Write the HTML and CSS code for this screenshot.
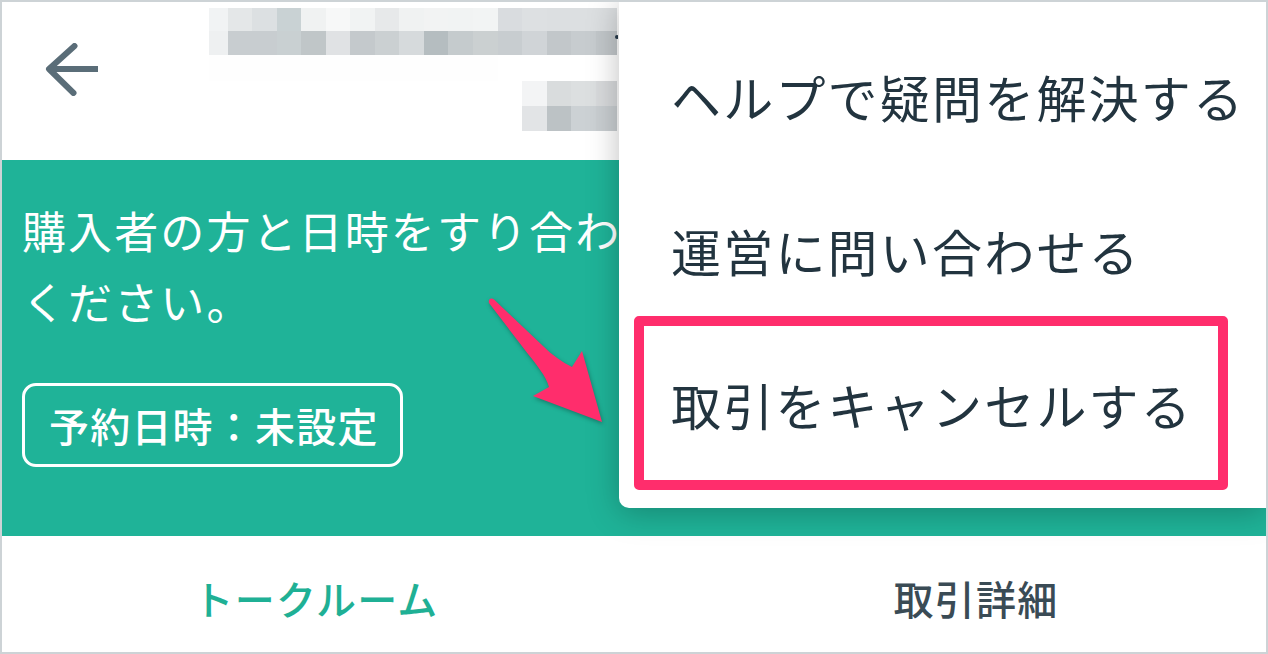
FILE: index.html
```html
<!DOCTYPE html>
<html lang="ja">
<head>
<meta charset="utf-8">
<title>取引メニュー</title>
<link rel="stylesheet" href="styles.css">
</head>
<body>
<div class="frame">
  <header class="header">
    <svg class="back" width="53" height="53" viewBox="45 43 53 53" aria-label="戻る">
      <path d="M97 69H50M74.500 46 49 69 73.500 93" fill="none" stroke="#5a6d78" stroke-width="6" stroke-linecap="round" stroke-linejoin="round"/>
    </svg>
    <svg class="mosaic" width="409" height="123" viewBox="209 8 409 123" aria-hidden="true">
      <g>
        <rect x="209" y="8" width="19" height="23" fill="#f1f3f4"/><rect x="228" y="8" width="24" height="23" fill="#e4e7e8"/><rect x="252" y="8" width="25" height="23" fill="#dce0e2"/><rect x="277" y="8" width="24" height="23" fill="#c9d2d4"/><rect x="301" y="8" width="25" height="23" fill="#f0f2f2"/><rect x="326" y="8" width="24" height="23" fill="#f7f8f8"/><rect x="350" y="8" width="25" height="23" fill="#f1f3f3"/><rect x="375" y="8" width="24" height="23" fill="#e7e9ea"/><rect x="399" y="8" width="25" height="23" fill="#f0f2f2"/><rect x="424" y="8" width="24" height="23" fill="#f2f3f3"/><rect x="448" y="8" width="25" height="23" fill="#f1f3f3"/><rect x="473" y="8" width="25" height="23" fill="#f2f4f4"/><rect x="498" y="8" width="24" height="23" fill="#d9dcdf"/><rect x="522" y="8" width="25" height="23" fill="#dde0e2"/><rect x="547" y="8" width="70" height="23" fill="#dcdfe1"/>
        <rect x="209" y="31" width="19" height="24" fill="#eef0f1"/><rect x="228" y="31" width="49" height="24" fill="#c8cdd0"/><rect x="277" y="31" width="24" height="24" fill="#c9d0d2"/><rect x="301" y="31" width="25" height="24" fill="#c0c6c8"/><rect x="326" y="31" width="24" height="24" fill="#e0e2e4"/><rect x="350" y="31" width="25" height="24" fill="#c4c9cc"/><rect x="375" y="31" width="24" height="24" fill="#cbd0d2"/><rect x="399" y="31" width="25" height="24" fill="#d6dadc"/><rect x="424" y="31" width="24" height="24" fill="#b5bdc0"/><rect x="448" y="31" width="25" height="24" fill="#c5cbcd"/><rect x="473" y="31" width="25" height="24" fill="#cbd0d1"/><rect x="498" y="31" width="24" height="24" fill="#c8cdd0"/><rect x="522" y="31" width="25" height="24" fill="#d0d4d7"/><rect x="547" y="31" width="24" height="24" fill="#c2c7ca"/><rect x="571" y="31" width="25" height="24" fill="#c7cccf"/><rect x="596" y="31" width="21" height="24" fill="#c2c7ca"/>
        <rect x="209" y="55" width="289" height="26" fill="#fefefe"/>
        <rect x="522" y="81" width="25" height="25" fill="#f3f4f5"/><rect x="547" y="81" width="24" height="25" fill="#d9dcdd"/><rect x="571" y="81" width="25" height="25" fill="#dcdfe0"/><rect x="596" y="81" width="21" height="25" fill="#d8dadc"/>
        <rect x="522" y="106" width="25" height="25" fill="#e2e4e6"/><rect x="547" y="106" width="24" height="25" fill="#bcc2c5"/><rect x="571" y="106" width="25" height="25" fill="#ccd1d4"/><rect x="596" y="106" width="21" height="25" fill="#c9ced1"/>
        <circle cx="617" cy="37" r="2" fill="#26394a"/>
      </g>
    </svg>
  </header>
  <section class="banner">
    <p class="notice">購入者の方と日時をすり合わせて<br>ください。</p>
    <span class="badge">予約日時：未設定</span>
  </section>
  <nav class="tabs">
    <a class="tab tab-active">トークルーム</a>
    <a class="tab tab-detail">取引詳細</a>
  </nav>
  <ul class="menu">
    <li class="menu-item">ヘルプで疑問を解決する</li>
    <li class="menu-item">運営に問い合わせる</li>
    <li class="menu-item">取引をキャンセルする</li>
  </ul>
  <div class="highlight"></div>
  <svg class="pointer" width="125" height="135" viewBox="485 295 125 135" aria-hidden="true">
    <path class="pointer-shape" d="M489 303C488 299 491 297 494 299.500L543 346C552 355 562 362 572 367L582 351 602 422 533 396 549 387C546 376 536 364 528 354Z"/>
  </svg>
</div>
</body>
</html>
```
FILE: styles.css
```css
* { box-sizing: border-box; }
html, body { margin: 0; padding: 0; }
body {
  width: 1268px;
  height: 654px;
  overflow: hidden;
  background: #fff;
  font-family: "Noto Sans CJK JP", "Noto Sans", sans-serif;
}
.frame {
  position: relative;
  display: flex;
  flex-direction: column;
  width: 1268px;
  height: 654px;
  border: 2px solid #cdd3d6;
  overflow: hidden;
}
.header {
  display: flex;
  align-items: flex-start;
  flex: 0 0 158px;
  padding: 6px 0 0 43px;
  background: #fff;
}
.back { margin-top: 35px; flex: none; }
.mosaic { margin-left: 111px; flex: none; }
.banner {
  flex: 0 0 376px;
  padding: 35px 0 0 20px;
  background: #1fb398;
  color: #fff;
  white-space: nowrap;
  overflow: hidden;
}
.notice {
  margin: 0 0 46px;
  font-size: 44px;
  line-height: 71px;
  letter-spacing: 2.1px;
}
.badge {
  display: inline-block;
  height: 84px;
  padding: 0 21px 0 24px;
  border: 3px solid #fff;
  border-radius: 14px;
  font-size: 40px;
  font-weight: 500;
  line-height: 78px;
  letter-spacing: 1.2px;
}
.tabs {
  display: grid;
  grid-template-columns: 1fr 1fr;
  flex: 1;
  background: #fff;
}
.tab {
  padding-top: 30px;
  text-align: center;
  font-size: 40px;
  font-weight: 500;
  line-height: 64px;
  letter-spacing: 1.2px;
  color: #3a4b55;
}
.tab-active { padding-right: 4px; color: #1fb095; }
.tab-detail { padding-left: 52px; }
.menu {
  position: absolute;
  top: -2px;
  right: 0;
  width: 647px;
  height: 508px;
  margin: 0;
  padding: 19px 0 0 52px;
  list-style: none;
  background: #fff;
  border-radius: 0 0 0 10px;
  box-shadow: 0 4px 32px rgba(0, 0, 0, .26);
}
.menu-item {
  height: 154px;
  font-size: 50px;
  line-height: 154px;
  letter-spacing: 2.2px;
  white-space: nowrap;
  color: #22343f;
}
.highlight {
  position: absolute;
  left: 632px;
  top: 314px;
  width: 594px;
  height: 174px;
  border: 10px solid #ff2d6c;
  border-radius: 5px;
}
.pointer {
  position: absolute;
  left: 483px;
  top: 293px;
  filter: drop-shadow(1px 2px 2px rgba(0, 0, 0, .3));
}
.pointer-shape { fill: #ff2d6c; }
```
